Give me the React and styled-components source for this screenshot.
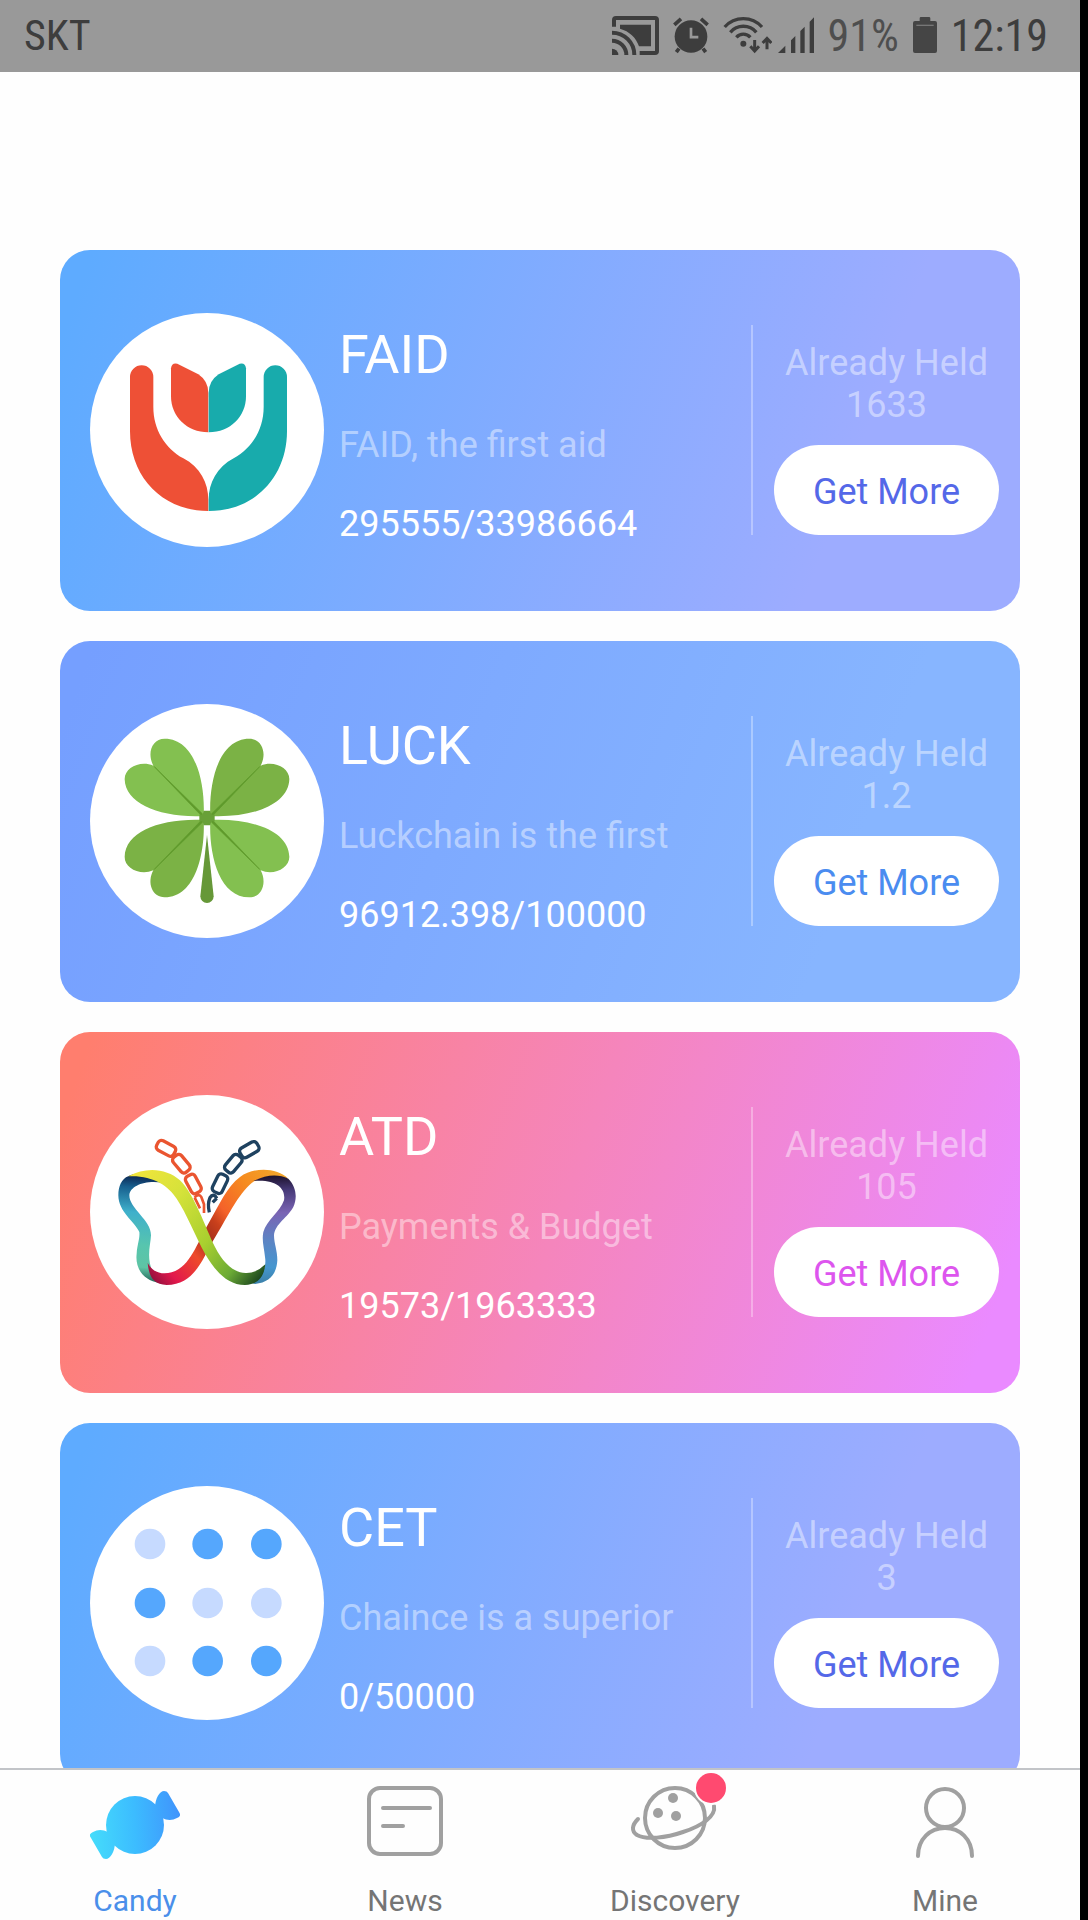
import React from "react";
import styled, { createGlobalStyle } from "styled-components";

const GlobalStyle = createGlobalStyle`
  *, *::before, *::after { box-sizing: border-box; }
  html, body { margin: 0; padding: 0; }
  body {
    background: #fff;
    font-family: Roboto, "Noto Sans", sans-serif;
  }
  h2, p { margin: 0; font-weight: 400; }
`;

const Shell = styled.div`
  display: flex;
  flex-direction: column;
  height: 100vh;
  border-right: 8px solid #000;
  background: #fefefe;
`;

const StatusBar = styled.header`
  flex: none;
  display: flex;
  align-items: center;
  justify-content: space-between;
  height: 72px;
  padding: 0 32px 2px 24px;
  background: #999;
  font-family: "Roboto Condensed", "Liberation Sans Narrow", Roboto, sans-serif;
  line-height: 52px;
`;

const StatusText = styled.span`
  padding-top: 2px;
  color: ${(p) => (p.$soft ? "#4e4e4e" : "#3d3d3d")};
  font-size: ${(p) => (p.$small ? 42 : 44)}px;
`;

const StatusGroup = styled.div`
  display: flex;
  align-items: center;
  gap: ${(p) => p.$gap}px;
`;

const CardList = styled.main`
  flex: 1;
  min-height: 0;
  overflow: hidden;
  display: flex;
  flex-direction: column;
  gap: 30px;
  padding: 178px 60px 0;
`;

const Card = styled.article`
  flex: none;
  display: flex;
  align-items: center;
  height: 361px;
  padding: 0 21px 2px 30px;
  border-radius: 30px;
  background: ${(p) => p.$fill};
  color: #fff;
`;

const Logo = styled.svg`
  flex: none;
  width: 234px;
  height: 234px;
  border-radius: 50%;
  background: #fff;
`;

const Info = styled.div`
  flex: 1;
  min-width: 0;
  display: flex;
  flex-direction: column;
  gap: 37px;
  padding: 9px 0 0 15px;
  font-size: 36px;
  line-height: 42px;
  white-space: nowrap;
`;

const Title = styled.h2`
  font-size: 54px;
  line-height: 64px;
`;

const Summary = styled.p`
  color: rgba(255, 255, 255, 0.45);
`;

const Holding = styled.div`
  flex: none;
  display: flex;
  flex-direction: column;
  justify-content: flex-end;
  gap: 19px;
  height: 210px;
  padding-left: 21px;
  border-left: 2px solid rgba(255, 255, 255, 0.32);
`;

const Held = styled.p`
  color: rgba(255, 255, 255, 0.45);
  font-size: 36px;
  line-height: 42px;
  text-align: center;
`;

const GetMore = styled.button`
  width: 225px;
  height: 90px;
  padding: 4px 0 0;
  border: 0;
  border-radius: 45px;
  background: #fff;
  color: ${(p) => p.$ink};
  font: inherit;
  font-size: 36px;
  line-height: 42px;
  cursor: pointer;
`;

const TabBar = styled.nav`
  flex: none;
  display: grid;
  grid-template-columns: repeat(4, 1fr);
  padding: 8px 0 2px;
  border-top: 2px solid #c2c4c8;
  background: #fefefe;
`;

const Tab = styled.a`
  display: flex;
  flex-direction: column;
  align-items: center;
  gap: 15px;
  color: ${(p) => (p.$active ? "#4a8fea" : "#757575")};
  font-size: 30px;
  line-height: 35px;
  text-decoration: none;
`;

const TabIcon = styled.span`
  position: relative;
  width: 90px;
  height: 90px;

  svg {
    display: block;
    overflow: visible;
  }
`;

const Badge = styled.span`
  position: absolute;
  top: -5px;
  right: -6px;
  width: 30px;
  height: 30px;
  border-radius: 50%;
  background: #ff4a70;
  box-shadow: 0 0 0 2px #fefefe;
`;

/* ---------- status icons ---------- */

const CastIcon = () => (
  <svg width="47" height="39" viewBox="0 0 141 117" fill="none" stroke="#3d3d3d" strokeWidth="12">
    <path d="M6 32V12Q6 6 12 6H129Q135 6 135 12V105Q135 111 129 111H83" />
    <path d="M24 26H117V91H81C72 64 52 46 24 38Z" fill="#3d3d3d" stroke="none" />
    <path d="M0 98A19 19 0 0 1 19 117H0Z" fill="#3d3d3d" stroke="none" />
    <path d="M0 74A43 43 0 0 1 43 117M0 50A67 67 0 0 1 67 117" />
  </svg>
);

const AlarmIcon = () => (
  <svg width="36" height="37" viewBox="0 0 108 110" fill="none" stroke="#3d3d3d" strokeWidth="11">
    <circle cx="54" cy="58" r="49" fill="#3d3d3d" stroke="none" />
    <path d="M4 23L24 5M84 5L104 23M18 94L10 105M90 94L98 105" />
    <path d="M54 32V60H76" stroke="#999" strokeWidth="8" />
  </svg>
);

const WifiIcon = () => (
  <svg width="49" height="38" viewBox="0 0 147 114" fill="none" stroke="#3d3d3d" strokeWidth="10">
    <path d="M5 33A75 75 0 0 1 117 33M22 49A51 51 0 0 1 100 49M40 64A28 28 0 0 1 82 64" />
    <circle cx="61" cy="83" r="9" fill="#3d3d3d" stroke="none" />
    <path d="M95 72V104M82 91L95 105L108 91M132 100V68M119 81L132 67L145 81" strokeWidth="9" />
  </svg>
);

const SignalIcon = () => (
  <svg width="36" height="36" viewBox="0 0 108 108" fill="#3d3d3d">
    <path d="M0 108L22 86V108ZM39 70L52 57V108H39ZM67 42L80 29V108H67ZM95 14L108 1V108H95Z" />
  </svg>
);

const BatteryIcon = () => (
  <svg width="24" height="36" viewBox="0 0 72 108" fill="#454545">
    <path d="M20 4Q20 0 24 0H48Q52 0 52 4V12H66Q72 12 72 18V102Q72 108 66 108H6Q0 108 0 102V18Q0 12 6 12H20Z" />
    <path d="M10 25H62" stroke="#777" strokeWidth="4" />
  </svg>
);

/* ---------- token logos ---------- */

const FaidHalf = () => (
  <>
    <path d="M120 192A35 35 0 0 1 190 192V281C190 350 225 405 280 436C330 462 355 510 355 560V594C215 594 120 490 120 355Z" />
    <path d="M243 166Q245 148 262 152L325 184Q355 204 355 240V358C290 358 243 310 243 250Z" />
  </>
);

const FaidLogo = () => (
  <Logo viewBox="0 0 702 702" aria-hidden="true">
    <g fill="#ee5036"><FaidHalf /></g>
    <g fill="#18abac" transform="translate(711 0) scale(-1 1)"><FaidHalf /></g>
  </Logo>
);

const Leaf = ({ fill, flip }) => (
  <g transform={flip}>
    <path
      d="M341 336C346 240 318 104 224 104C186 104 170 148 190 185C150 168 103 192 104 226C106 300 210 342 341 336Z"
      fill={fill}
    />
    <path d="M193 188L338 330L334 335Z" fill="#5f9a2c" stroke="#5f9a2c" strokeWidth="2" />
  </g>
);

const LuckLogo = () => (
  <Logo viewBox="0 0 702 702" aria-hidden="true">
    <Leaf fill="#83c050" />
    <Leaf fill="#7bb245" flip="translate(702 0) scale(-1 1)" />
    <Leaf fill="#7bb245" flip="translate(0 684) scale(1 -1)" />
    <Leaf fill="#83c050" flip="translate(702 684) scale(-1 -1)" />
    <path d="M341 320H361L364 332H374V352H364L361 364H341L338 352H328V332H338Z" fill="#68a038" />
    <path d="M351 393L331 577A20 20 0 0 0 371 577Z" fill="#669838" />
  </Logo>
);

const Link = ({ x, y, turn }) => (
  <rect x="-29" y="-16" width="58" height="32" rx="11" transform={`translate(${x} ${y}) rotate(${turn})`} />
);

const AtdLogo = () => (
  <Logo viewBox="30 44 702 702" aria-hidden="true">
    <defs>
      <linearGradient id="atdLeft" gradientUnits="userSpaceOnUse" x1="215" y1="285" x2="190" y2="610">
        <stop offset="0" stopColor="#0c1f4a" />
        <stop offset="0.12" stopColor="#175f8e" />
        <stop offset="0.35" stopColor="#3fb0cb" />
        <stop offset="0.65" stopColor="#57c5ae" />
        <stop offset="0.85" stopColor="#5ec4a4" />
        <stop offset="1" stopColor="#1f5a50" />
      </linearGradient>
      <linearGradient id="atdGreen" gradientUnits="userSpaceOnUse" x1="150" y1="280" x2="550" y2="600">
        <stop offset="0" stopColor="#f3e53c" />
        <stop offset="0.3" stopColor="#d5e23a" />
        <stop offset="0.6" stopColor="#a8cf2f" />
        <stop offset="0.82" stopColor="#6cab35" />
        <stop offset="1" stopColor="#123b1c" />
      </linearGradient>
      <linearGradient id="atdRed" gradientUnits="userSpaceOnUse" x1="210" y1="600" x2="600" y2="275">
        <stop offset="0" stopColor="#8a0f3c" />
        <stop offset="0.12" stopColor="#e2184c" />
        <stop offset="0.3" stopColor="#ee4a2a" />
        <stop offset="0.42" stopColor="#a5301c" />
        <stop offset="0.52" stopColor="#c9401c" />
        <stop offset="0.6" stopColor="#f4622a" />
        <stop offset="0.8" stopColor="#f68b1f" />
        <stop offset="1" stopColor="#f2a52a" />
      </linearGradient>
      <linearGradient id="atdRight" gradientUnits="userSpaceOnUse" x1="560" y1="285" x2="570" y2="610">
        <stop offset="0" stopColor="#1b1029" />
        <stop offset="0.14" stopColor="#473a78" />
        <stop offset="0.35" stopColor="#7a64b4" />
        <stop offset="0.6" stopColor="#5c84c4" />
        <stop offset="0.85" stopColor="#4596cf" />
        <stop offset="1" stopColor="#3b80a8" />
      </linearGradient>
    </defs>
    <path
      fill="url(#atdLeft)"
      d="M145 288C165 276 205 278 250 308C200 298 150 315 148 345C148 385 214 420 213 465C212 500 190 550 240 608C185 600 165 560 170 520C172 490 180 475 178 455C165 425 115 395 115 345C115 318 125 295 145 288Z"
    />
    <path
      fill="url(#atdRed)"
      d="M203 548C222 582 252 582 275 576C330 560 350 490 385 430C420 370 440 320 480 290C520 260 590 260 625 295C590 285 545 285 515 308C475 340 440 415 400 480C370 530 345 614 260 614C220 612 207 590 203 548Z"
    />
    <path
      fill="url(#atdRight)"
      d="M625 295C650 320 652 355 640 380C625 410 585 430 582 465C582 490 592 510 592 540C590 580 570 606 525 611L500 604C550 590 560 560 555 530C552 500 545 480 550 455C560 420 600 395 612 360C618 325 590 296 520 302C560 282 595 280 625 295Z"
    />
    <path
      fill="url(#atdGreen)"
      d="M145 288C200 258 260 265 300 300C345 345 375 440 405 500C430 550 465 580 500 578Q530 578 556 552C552 590 534 612 495 614C440 614 405 570 375 520C345 465 320 400 290 355C265 315 215 284 145 288Z"
    />
    <g fill="none" stroke="#ea5530" strokeWidth="10">
      <Link x={258} y={204} turn={28} />
      <Link x={304} y={250} turn={50} />
      <Link x={340} y={311} turn={62} />
      <path d="M344 352C350 342 360 342 364 350L372 372V398M344 352L360 384" strokeWidth="8" />
    </g>
    <g fill="none" stroke="#1f4260" strokeWidth="10">
      <Link x={508} y={208} turn={-30} />
      <Link x={460} y={250} turn={-50} />
      <Link x={420} y={310} turn={-64} />
      <path d="M410 354C405 342 396 342 390 352C384 366 384 380 388 396M410 354L398 366" />
    </g>
  </Logo>
);

const CET_DOTS = [
  [0, 1, 1],
  [1, 0, 0],
  [0, 1, 1],
];

const CetLogo = () => (
  <Logo viewBox="0 0 702 702" aria-hidden="true">
    {CET_DOTS.map((row, r) =>
      row.map((on, c) => (
        <circle
          key={`${r}-${c}`}
          cx={[180, 353, 529][c]}
          cy={[174, 351, 525][r]}
          r="46"
          fill={on ? "#55a7fd" : "#c6daff"}
        />
      ))
    )}
  </Logo>
);

/* ---------- tab icons ---------- */

const CandyIcon = () => (
  <svg width="90" height="90" viewBox="0 0 90 90" fill="url(#candyFill)">
    <defs>
      <linearGradient id="candyFill" gradientUnits="userSpaceOnUse" x1="0" y1="50" x2="90" y2="44">
        <stop offset="0" stopColor="#45dcfb" />
        <stop offset="0.5" stopColor="#3cbcff" />
        <stop offset="1" stopColor="#4094fc" />
      </linearGradient>
    </defs>
    <circle cx="45" cy="47" r="29" />
    <path d="M65 30C65 20 70 13 74 13Q77 13 78 15L89 34Q92 38 87 40Q80 44 72 40Z" />
    <path d="M25 64C25 74 20 81 16 81Q13 81 12 79L1 60Q-2 56 3 54Q10 50 18 54Z" />
  </svg>
);

const NewsIcon = () => (
  <svg width="90" height="90" viewBox="0 0 90 90" fill="none" stroke="#a0a0a0" strokeWidth="4" strokeLinecap="round">
    <rect x="9" y="10" width="72" height="66" rx="11" />
    <path d="M23 30H70M23 48H43" />
  </svg>
);

const DiscoveryIcon = () => (
  <svg width="90" height="90" viewBox="0 0 90 90" fill="none" stroke="#a0a0a0" strokeWidth="4" strokeLinecap="round">
    <circle cx="45" cy="40" r="30" />
    <path d="M8 41C2 47 1 53 7 57C16 62 36 60 53 54C72 48 86 38 84 28" />
    <g fill="#a0a0a0" stroke="none">
      <circle cx="43" cy="20" r="5" />
      <circle cx="28" cy="35" r="5" />
      <circle cx="46" cy="38" r="5" />
    </g>
  </svg>
);

const MineIcon = () => (
  <svg width="90" height="90" viewBox="0 0 90 90" fill="none" stroke="#a0a0a0" strokeWidth="4" strokeLinecap="round">
    <circle cx="45" cy="30" r="19" />
    <path d="M18 78C18 61 30 50 45 50C60 50 72 61 72 78" />
  </svg>
);

/* ---------- data ---------- */

const VIOLET = "linear-gradient(110deg, #5eabff 3%, #9dacff 80%)";
const BLUE = "linear-gradient(110deg, #759fff 3%, #87b5ff 80%)";
const PINK = "linear-gradient(110deg, #ff7e6e 3%, #f585bc 52%, #ea8aff 95%)";

const TOKENS = [
  { name: "FAID", summary: "FAID, the first aid", amount: "295555/33986664", held: "1633", fill: VIOLET, ink: "#5468e8", Mark: FaidLogo },
  { name: "LUCK", summary: "Luckchain is the first", amount: "96912.398/100000", held: "1.2", fill: BLUE, ink: "#4a8cf0", Mark: LuckLogo },
  { name: "ATD", summary: "Payments & Budget", amount: "19573/1963333", held: "105", fill: PINK, ink: "#dd55ee", Mark: AtdLogo },
  { name: "CET", summary: "Chaince is a superior", amount: "0/50000", held: "3", fill: VIOLET, ink: "#5468e8", Mark: CetLogo },
];

const TABS = [
  { label: "Candy", Icon: CandyIcon, active: true },
  { label: "News", Icon: NewsIcon },
  { label: "Discovery", Icon: DiscoveryIcon, badge: true },
  { label: "Mine", Icon: MineIcon },
];

export default function App() {
  return (
    <Shell>
      <GlobalStyle />
      <StatusBar>
        <StatusText $small>SKT</StatusText>
        <StatusGroup $gap={14}>
          <CastIcon />
          <AlarmIcon />
          <StatusGroup $gap={6}>
            <WifiIcon />
            <SignalIcon />
          </StatusGroup>
          <StatusText $soft>91%</StatusText>
          <BatteryIcon />
          <StatusText as="time">12:19</StatusText>
        </StatusGroup>
      </StatusBar>
      <CardList>
        {TOKENS.map(({ name, summary, amount, held, fill, ink, Mark }) => (
          <Card key={name} $fill={fill}>
            <Mark />
            <Info>
              <Title>{name}</Title>
              <Summary>{summary}</Summary>
              <p>{amount}</p>
            </Info>
            <Holding>
              <Held>
                Already Held
                <br />
                {held}
              </Held>
              <GetMore type="button" $ink={ink}>Get More</GetMore>
            </Holding>
          </Card>
        ))}
      </CardList>
      <TabBar>
        {TABS.map(({ label, Icon, active, badge }) => (
          <Tab key={label} href={`#${label.toLowerCase()}`} $active={active}>
            <TabIcon>
              <Icon />
              {badge && <Badge />}
            </TabIcon>
            {label}
          </Tab>
        ))}
      </TabBar>
    </Shell>
  );
}
